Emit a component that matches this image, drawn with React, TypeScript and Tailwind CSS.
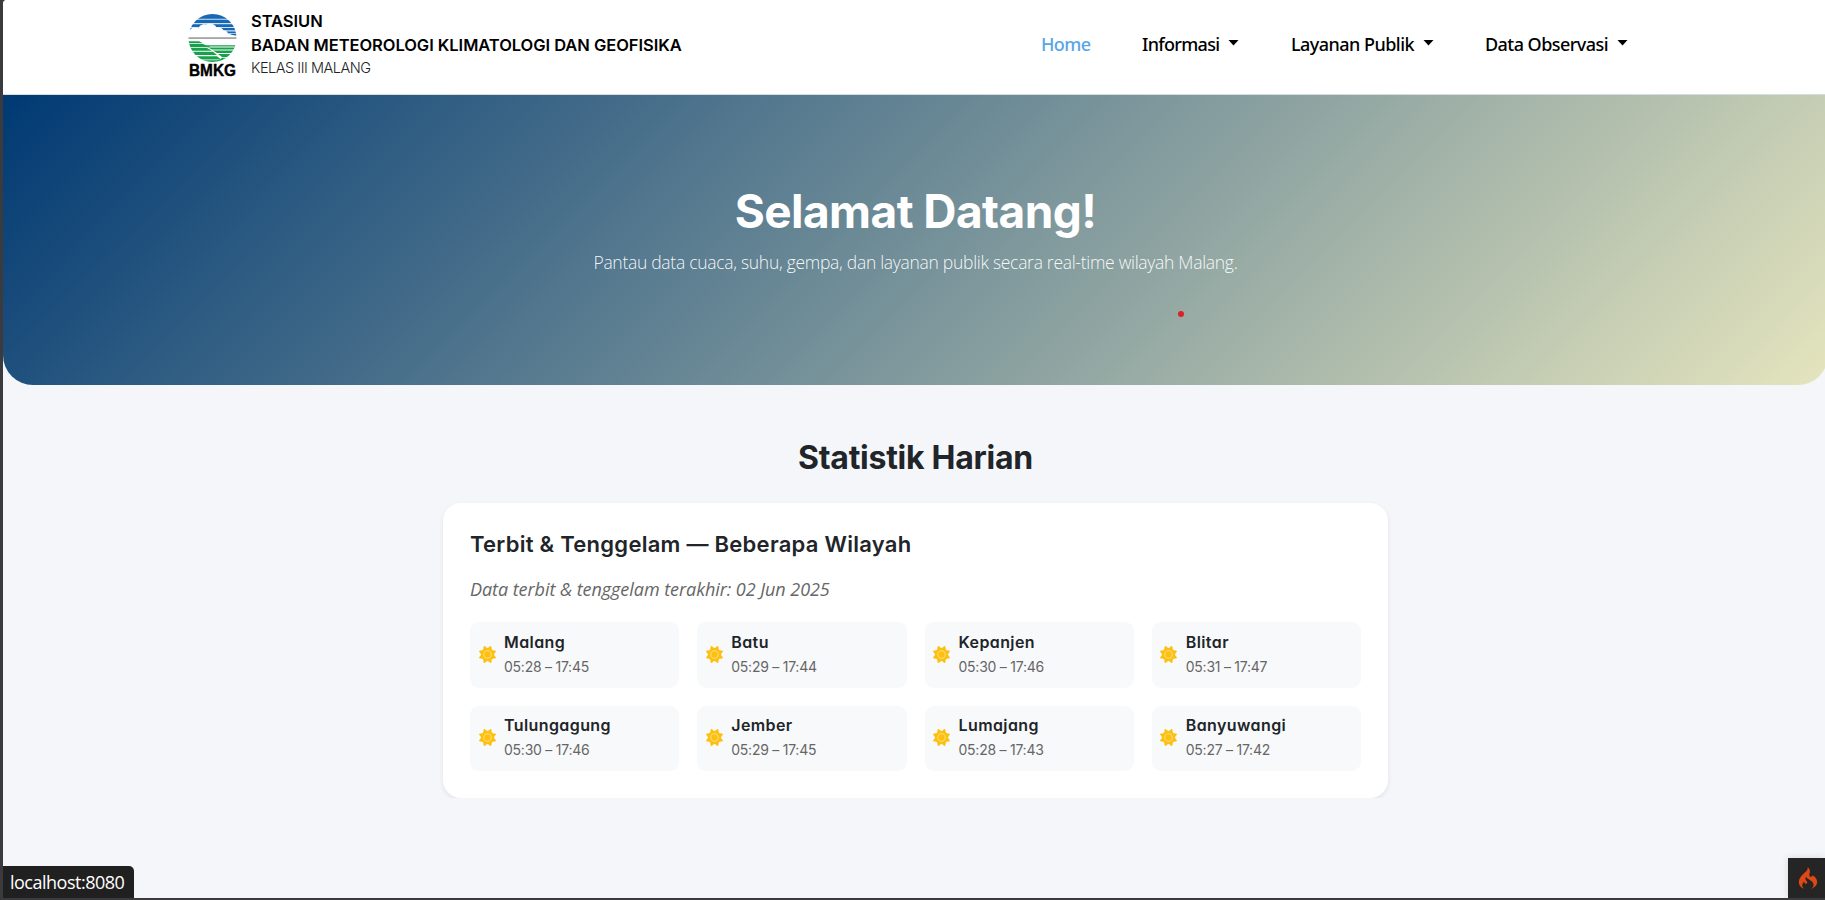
import { FaSun } from "react-icons/fa6";
import { SiCodeigniter } from "react-icons/si";

const cities = [
  { name: "Malang", time: "05:28 – 17:45" },
  { name: "Batu", time: "05:29 – 17:44" },
  { name: "Kepanjen", time: "05:30 – 17:46" },
  { name: "Blitar", time: "05:31 – 17:47" },
  { name: "Tulungagung", time: "05:30 – 17:46" },
  { name: "Jember", time: "05:29 – 17:45" },
  { name: "Lumajang", time: "05:28 – 17:43" },
  { name: "Banyuwangi", time: "05:27 – 17:42" },
];

function Logo() {
  return (
    <svg width="52" height="74" viewBox="0 0 52 74" className="mr-[-2px] block shrink-0">
      <defs>
        <clipPath id="globe">
          <circle cx="25.500" cy="26" r="24" />
        </clipPath>
      </defs>
      <g clipPath="url(#globe)">
        <g fill="#1769b5">
          <rect x="0" y="2" width="50" height="4.800" />
          <rect x="0" y="7.600" width="50" height="3.600" />
          <rect x="0" y="12.200" width="50" height="3" />
          <rect x="0" y="16" width="50" height="2.400" />
          <rect x="33" y="19.400" width="17" height="2" />
          <rect x="39" y="22" width="11" height="1.500" />
        </g>
        <path
          d="M0 26V17.500L3 17.800C5 15 9.500 15 11.500 16.500C12 13 17 11.500 19 12.500C22 10.500 28 11.500 29.500 15.500C32.500 14.500 36 16.500 36.500 18.500C39 18 40.500 20 41 21.500L50 24.500V26Z"
          fill="#fff"
        />
        <rect x="0" y="25.200" width="50" height="1.800" fill="#a9a3a3" />
        <g fill="#18a14b">
          <path d="M0 29.200H12L16 31.300H0Z" />
          <path d="M0 31.900H16L19 33.200H50V34.600H22L23 35.200H0Z" />
          <path d="M0 36H20L25 38.800H0Z" />
          <path d="M21 35.400H50V37.600H25Z" />
          <path d="M0 39.800H26L30 43.100H0Z" />
          <path d="M26 38.500H50V41H30Z" />
          <path d="M0 44.200H30L34 47.400H0Z" />
          <path d="M31 42H50V45H35Z" />
          <path d="M35 45.800H50V50.200H0V48.200H30L33 47.600Z" />
        </g>
      </g>
      <text
        x="25.500"
        y="63.800"
        textAnchor="middle"
        textLength="47"
        lengthAdjust="spacingAndGlyphs"
        className="font-['Liberation_Sans',sans-serif] text-[16px] font-bold"
        stroke="#000"
        strokeWidth="0.400"
      >
        BMKG
      </text>
    </svg>
  );
}

function Caret() {
  return (
    <svg width="11" height="6" viewBox="0 0 11 6" className="mb-[2px]">
      <path d="M0.500 0H10.500L5.500 5.500Z" fill="#000" />
    </svg>
  );
}

function Header() {
  return (
    <header className="flex h-[95px] shrink-0 rounded-tl-[4px] border-b border-[#d5dde0] bg-white pl-[184px]">
      <div className="flex w-[854px] pt-[9px]">
        <div className="pt-[3px]">
          <Logo />
        </div>
        <div className="ml-[14px] whitespace-nowrap text-black">
          <p className="text-[16.5px] leading-6 font-semibold tracking-[-0.05px]">STASIUN</p>
          <p className="text-[16.5px] leading-6 font-semibold tracking-[-0.05px]">
            BADAN METEOROLOGI KLIMATOLOGI DAN GEOFISIKA
          </p>
          <p className="text-[14.5px] leading-[22px] font-light tracking-[-0.48px] text-[#222]">
            KELAS III MALANG
          </p>
        </div>
      </div>
      <nav className="flex h-[88px] items-center font-['Noto_Sans',sans-serif] text-[18px] font-medium whitespace-nowrap text-black">
        <a className="w-[101px] tracking-[-0.6px] text-[#58a6e6]">Home</a>
        <a className="flex w-[149px] items-center gap-[9px] tracking-[-0.7px]">
          Informasi <Caret />
        </a>
        <a className="flex w-[194px] items-center gap-[9px] tracking-[-0.53px]">
          Layanan Publik <Caret />
        </a>
        <a className="flex items-center gap-[9px] tracking-[-0.55px]">
          Data Observasi <Caret />
        </a>
      </nav>
    </header>
  );
}

function Hero() {
  return (
    <section className="relative h-[290px] shrink-0 rounded-b-[30px] bg-[linear-gradient(135deg,#003973,#e5e5be)] pt-[86px] text-center text-white">
      <h1 className="text-[46px] leading-[60px] font-bold tracking-[-0.56px]">Selamat Datang!</h1>
      <p className="mt-[7px] font-['Open_Sans',sans-serif] text-[17.5px] leading-7 font-light tracking-[-0.29px] text-white/95">
        Pantau data cuaca, suhu, gempa, dan layanan publik secara real-time wilayah Malang.
      </p>
      <span className="absolute top-[216px] left-[1175px] size-[6px] rounded-full bg-[#dc2026]" />
    </section>
  );
}

function CityCard({ name, time }: { name: string; time: string }) {
  return (
    <div className="flex items-center gap-[8.5px] rounded-[9px] bg-[#f8f9fb] pb-[2px] pl-[8.5px]">
      <FaSun className="size-[17px] bg-[radial-gradient(circle,#ffdf80_5px,transparent_5px)] text-[#fdc010]" />
      <div className="whitespace-nowrap [font-feature-settings:'cv11']">
        <p className="text-[16px] leading-6 font-semibold tracking-[0.4px] text-[#212529]">{name}</p>
        <p className="text-[14px] leading-[25px] tracking-[-0.25px] text-[#666]">{time}</p>
      </div>
    </div>
  );
}

function DailyStats() {
  return (
    <section className="flex h-[413px] shrink-0 flex-col items-center overflow-hidden pt-[53px] text-[#212529]">
      <h2 className="text-[32px] leading-10 font-bold tracking-[-0.27px]">Statistik Harian</h2>
      <div className="mt-[25px] h-[295px] w-[945px] shrink-0 rounded-[18px] bg-white px-[27px] pt-[26px] shadow-[0_2px_5px_rgba(0,0,0,0.08)]">
        <h3 className="text-[22px] leading-[30px] font-semibold tracking-[0.27px]">
          Terbit &amp; Tenggelam — Beberapa Wilayah
        </h3>
        <p className="mt-4 font-['Open_Sans',sans-serif] text-[18px] leading-7 tracking-[-0.05px] text-[#666] italic">
          Data terbit &amp; tenggelam terakhir: 02 Jun 2025
        </p>
        <div className="mt-[19px] grid grid-cols-4 grid-rows-[66px_65px] gap-[18px]">
          {cities.map((c) => (
            <CityCard key={c.name} name={c.name} time={c.time} />
          ))}
        </div>
      </div>
    </section>
  );
}

export default function App() {
  return (
    <div className="relative h-[900px] w-[1825px] overflow-hidden border-b-2 border-l-[3px] border-[#3b3b3d] bg-[#3b3b3d] font-['Inter',sans-serif]">
      <div className="flex h-[898px] w-[1825px] flex-col rounded-tl-[4px] bg-[#f4f6fa]">
        <Header />
        <Hero />
        <DailyStats />
      </div>
      <div className="absolute bottom-0 left-0 flex h-8 w-[131px] items-center rounded-tr-[5px] bg-[#202020] pl-[7px] font-['Open_Sans',sans-serif] text-[18px] tracking-[-0.5px] text-white">
        localhost:8080
      </div>
      <div className="absolute right-0 bottom-0 flex h-10 w-[37px] items-center justify-center bg-[#252525] pl-[2px] shadow-[0_0_8px_rgba(0,0,0,0.12)]">
        <SiCodeigniter className="size-[22px] text-[#dd4814]" />
      </div>
    </div>
  );
}
